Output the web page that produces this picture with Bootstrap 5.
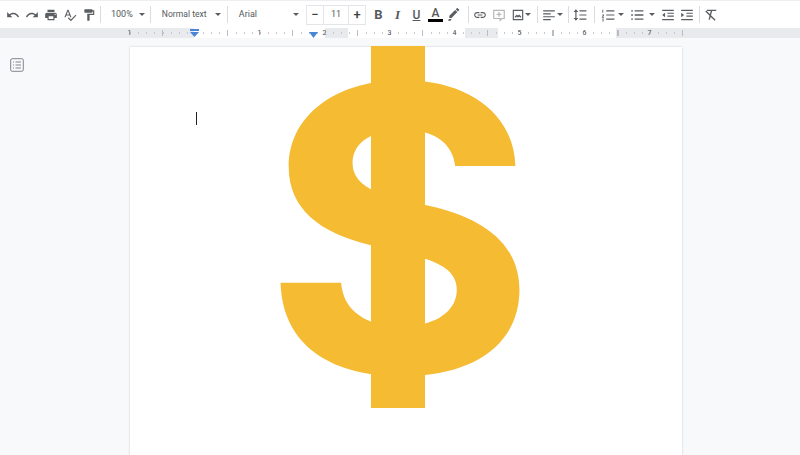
<!DOCTYPE html>
<html lang="en">
<head>
    <meta charset="UTF-8">
    <title>Untitled document</title>

    <!-- Bootstrap CSS -->
    <link href="https://cdn.jsdelivr.net/npm/bootstrap@5.3.0/dist/css/bootstrap.min.css" rel="stylesheet">

    <style>
        html, body { height: 100%; overflow: hidden; }
        body { background: #f8f9fa; font-family: Roboto, "Liberation Sans", sans-serif; color: #55595d; }

        /* Toolbar */
        .tool-bar { height: 28px; background: #fff; border-top: 1px solid #eceef0; padding-left: 3px; font-size: 9px; }
        .tool-btn { width: 19px; height: 19px; flex: none; }
        .tool-btn svg { width: 14px; height: 14px; fill: #5a5e62; }
        .tool-line svg { fill: none; stroke: #5a5e62; stroke-width: 2; }
        .tool-sep { width: 1px; height: 17px; background: #dadce0; flex: none; }
        .caret { width: 0; height: 0; border-left: 3px solid transparent; border-right: 3px solid transparent; border-top: 3px solid #5a5e62; flex: none; }
        .tool-label { flex: none; white-space: nowrap; }
        .font-box { width: 60px; height: 20px; border: 1px solid #e3e5e8; flex: none; }
        .font-box > div { height: 100%; }
        .font-step { width: 16px; font-size: 13px; font-weight: 500; color: #3c4043; }
        .font-size-val { width: 26px; font-size: 9px; border-left: 1px solid #e3e5e8; border-right: 1px solid #e3e5e8; }
        .fmt-letter { font-size: 13px; font-weight: 700; color: #55595d; line-height: 1; }
        .fmt-i { font-style: italic; font-family: "Liberation Serif", serif; }
        .fmt-u { text-decoration: underline; font-weight: 500; font-size: 12px; }
        .fmt-a { font-weight: 500; font-size: 12px; border-bottom: 3px solid #000; width: 15px; text-align: center; line-height: 11px; }
        .faint-icon { opacity: .45; }

        /* spacing between toolbar groups */
        .sep-a { margin-left: 2px; }
        .zoom-label { margin-left: 10px; }
        .caret-zoom { margin-left: 6px; }
        .sep-b { margin-left: 5px; }
        .style-label { margin-left: 11px; width: 42px; font-size: 8.6px; }
        .caret-style { margin-left: 11px; }
        .sep-c { margin-left: 6px; }
        .font-label { margin-left: 11px; }
        .caret-font { margin-left: 36px; }
        .font-box { margin-left: 7px; }
        .fmt-first { margin-left: 3px; }
        .sep-d { margin-left: 4px; }
        .tool-sep + .tool-btn { margin-left: 2px; }
        .caret-image { margin-left: -3px; }
        .sep-e { margin-left: 6px; }
        .caret-align { margin-left: -2px; }
        .sep-f { margin-left: 5px; }
        .sep-g { margin-left: 4px; }
        .tool-sep + .numbered-btn { margin-left: 4px; }
        .caret-num { margin-left: 0; }
        .bullets-btn { margin-left: 4px; }
        .caret-bul { margin-left: 2px; }
        .indent-btn { margin-left: 4px; }
        .sep-h { margin-left: 2px; }

        /* Ruler */
        .ruler-band { height: 10px; background: #e8eaed; position: relative; }
        .ruler-track { position: absolute; left: 130px; top: 0; width: 553px; height: 10px; background: #fff; }
        .ruler-margin-l { position: absolute; left: 0; top: 0; width: 64px; height: 10px; background: #e8eaed; }
        .ruler-margin-r { position: absolute; right: 0; top: 0; width: 67px; height: 10px; background: #e8eaed; }
        .ruler-grey-a { position: absolute; left: 195px; top: 0; width: 23px; height: 10px; background: #e8eaed; }
        .ruler-grey-b { position: absolute; left: 335px; top: 0; width: 33px; height: 10px; background: #e8eaed; }
        /* minor ticks every 1/8 inch, taller ones at each half inch */
        .ruler-track::after { content: ""; position: absolute; inset: 0;
            background:
                repeating-linear-gradient(90deg, transparent 0, transparent 32.5px, #b9bcc0 32.5px, #b9bcc0 33.5px, transparent 33.5px, transparent 65px) 0 2px / 100% 6px no-repeat,
                repeating-linear-gradient(90deg, #c6c9cc 0, #c6c9cc 1px, transparent 1px, transparent 8.125px) 0 4px / 100% 2px no-repeat; }
        .ruler-nums { position: absolute; left: 97px; top: 0; height: 10px; font-size: 7px; line-height: 10px; color: #4a4e52; }
        .ruler-nums span { width: 65px; text-align: center; flex: none; }
        .indent-mark { position: absolute; width: 9px; height: 8px; }
        .indent-a { left: 190px; top: 1px; }
        .indent-b { left: 309px; top: 3px; }

        /* Document area */
        .doc-area { position: relative; height: 417px; }
        .outline-btn { position: absolute; left: 10px; top: 20px; width: 14px; height: 14px; }
        .doc-page { position: absolute; left: 130px; top: 9px; width: 552px; height: 420px; background: #fff; box-shadow: 0 0 2px rgba(60, 64, 67, .25); }
        .text-caret { position: absolute; left: 66px; top: 65px; width: 1px; height: 13px; background: #202124; }
        .big-dollar { position: absolute; left: 2px; width: 536px; top: -17px; font-family: Inter, "Liberation Sans", sans-serif; font-weight: 700; font-size: 396px; line-height: 1; color: #f4bb33; text-align: center; transform: scaleX(1.055); clip-path: inset(16px 0 18px 0); }
        .dollar-stem { position: absolute; left: 241px; top: -1px; width: 54px; height: 362px; background: #f4bb33; }
    </style>
</head>
<body>

    <!-- Toolbar -->
    <div class="tool-bar d-flex align-items-center">
        <div class="tool-btn d-flex align-items-center justify-content-center"><svg viewBox="0 0 24 24"><path d="M12.5 8c-2.65 0-5.05.99-6.9 2.6L2 7v9h9l-3.62-3.62c1.39-1.16 3.16-1.88 5.12-1.88 3.54 0 6.55 2.31 7.6 5.5l2.37-.78C21.08 11.03 17.15 8 12.5 8z"/></svg></div>
        <div class="tool-btn d-flex align-items-center justify-content-center"><svg viewBox="0 0 24 24"><path d="M18.4 10.6C16.55 8.99 14.15 8 11.5 8c-4.65 0-8.58 3.03-9.96 7.22L3.9 16c1.05-3.19 4.05-5.5 7.6-5.5 1.95 0 3.73.72 5.12 1.88L13 16h9V7l-3.6 3.6z"/></svg></div>
        <div class="tool-btn d-flex align-items-center justify-content-center"><svg viewBox="0 0 24 24"><path d="M19 8H5c-1.66 0-3 1.34-3 3v6h4v4h12v-4h4v-6c0-1.66-1.34-3-3-3zm-3 11H8v-5h8v5zm3-7c-.55 0-1-.45-1-1s.45-1 1-1 1 .45 1 1-.45 1-1 1zm-1-9H6v4h12V3z"/></svg></div>
        <div class="tool-btn d-flex align-items-center justify-content-center"><svg viewBox="0 0 24 24"><path d="M12.45 16h2.09L9.43 3H7.57L2.46 16h2.09l1.12-3h5.64l1.14 3zm-6.02-5L8.5 5.48 10.57 11H6.43zm15.16.59l-8.09 8.09L9.83 16l-1.41 1.41 5.09 5.09L23 13l-1.41-1.41z"/></svg></div>
        <div class="tool-btn d-flex align-items-center justify-content-center"><svg viewBox="0 0 24 24"><path d="M18 4V3c0-.55-.45-1-1-1H5c-.55 0-1 .45-1 1v4c0 .55.45 1 1 1h12c.55 0 1-.45 1-1V6h1v4H9v11c0 .55.45 1 1 1h2c.55 0 1-.45 1-1v-9h8V4h-3z"/></svg></div>
        <div class="tool-sep sep-a"></div>

        <span class="tool-label zoom-label">100%</span>
        <span class="caret caret-zoom"></span>
        <div class="tool-sep sep-b"></div>
        <span class="tool-label style-label">Normal text</span>
        <span class="caret caret-style"></span>
        <div class="tool-sep sep-c"></div>
        <span class="tool-label font-label">Arial</span>
        <span class="caret caret-font"></span>

        <div class="font-box d-flex">
            <div class="font-step d-flex align-items-center justify-content-center">&minus;</div>
            <div class="font-size-val d-flex align-items-center justify-content-center">11</div>
            <div class="font-step d-flex align-items-center justify-content-center">+</div>
        </div>

        <div class="tool-btn fmt-first d-flex align-items-center justify-content-center"><span class="fmt-letter">B</span></div>
        <div class="tool-btn d-flex align-items-center justify-content-center"><span class="fmt-letter fmt-i">I</span></div>
        <div class="tool-btn d-flex align-items-center justify-content-center"><span class="fmt-letter fmt-u">U</span></div>
        <div class="tool-btn d-flex align-items-center justify-content-center"><span class="fmt-letter fmt-a">A</span></div>
        <div class="tool-btn d-flex align-items-center justify-content-center"><svg viewBox="0 0 24 24"><path d="M17.75 7L14 3.25l-10 10V17h3.75l10-10zm2.96-2.96c.39-.39.39-1.02 0-1.41L18.37.29a.996.996 0 0 0-1.41 0L15 2.25 18.75 6l1.96-1.96zM3 19h5l-2 3H2z"/></svg></div>
        <div class="tool-sep sep-d"></div>

        <div class="tool-btn d-flex align-items-center justify-content-center"><svg viewBox="0 0 24 24"><path d="M3.9 12c0-1.71 1.39-3.1 3.1-3.1h4V7H7c-2.76 0-5 2.24-5 5s2.24 5 5 5h4v-1.9H7c-1.71 0-3.1-1.39-3.1-3.1zM8 13h8v-2H8v2zm9-6h-4v1.9h4c1.71 0 3.1 1.39 3.1 3.1s-1.39 3.1-3.1 3.1h-4V17h4c2.76 0 5-2.24 5-5s-2.24-5-5-5z"/></svg></div>
        <div class="tool-btn tool-line d-flex align-items-center justify-content-center"><svg viewBox="0 0 24 24" class="faint-icon"><path d="M3 4h18v14h-4l-3 3v-3H3zM12 7v8M8 11h8"/></svg></div>
        <div class="tool-btn tool-line d-flex align-items-center justify-content-center"><svg viewBox="0 0 24 24"><path d="M4 4h16v16H4z"/><path d="M7 16l3-3 2 2 2-2 3 3" stroke-width="2.5"/></svg></div>
        <span class="caret caret-image"></span>
        <div class="tool-sep sep-e"></div>

        <div class="tool-btn tool-line d-flex align-items-center justify-content-center"><svg viewBox="0 0 24 24"><path d="M2 5h20M2 10h13M2 15h20M2 20h13"/></svg></div>
        <span class="caret caret-align"></span>
        <div class="tool-sep sep-f"></div>
        <div class="tool-btn tool-line spacing-btn d-flex align-items-center justify-content-center"><svg viewBox="0 0 24 24"><path d="M11 5h12M11 12h12M11 19h12M5 4v16"/><path d="M1 7l4-5 4 5zM1 17l4 5 4-5z" fill="#5a5e62" stroke="none"/></svg></div>
        <div class="tool-sep sep-g"></div>
        <div class="tool-btn tool-line numbered-btn d-flex align-items-center justify-content-center"><svg viewBox="0 0 24 24"><path d="M9 5h14M9 12h14M9 19h14"/><path d="M3 3v5M2 12h3l-3 4h3M2 19h3M2 22h3" stroke-width="1.5"/></svg></div>
        <span class="caret caret-num"></span>
        <div class="tool-btn tool-line bullets-btn d-flex align-items-center justify-content-center"><svg viewBox="0 0 24 24"><path d="M8 5h15M8 12h15M8 19h15M2 5h3M2 12h3M2 19h3" stroke-width="2.4"/></svg></div>
        <span class="caret caret-bul"></span>
        <div class="tool-btn tool-line indent-btn d-flex align-items-center justify-content-center"><svg viewBox="0 0 24 24"><path d="M2 4h20M11 9h11M11 14h11M2 20h20"/><path d="M7 8v8l-5-4z" fill="#5a5e62" stroke="none"/></svg></div>
        <div class="tool-btn tool-line d-flex align-items-center justify-content-center"><svg viewBox="0 0 24 24"><path d="M2 4h20M11 9h11M11 14h11M2 20h20"/><path d="M2 8v8l5-4z" fill="#5a5e62" stroke="none"/></svg></div>
        <div class="tool-sep sep-h"></div>
        <div class="tool-btn tool-line clear-btn d-flex align-items-center justify-content-center"><svg viewBox="0 0 24 24"><path d="M5 4h16M13 4l-4 16M3 5l16 16" stroke-width="2.4"/></svg></div>
    </div>

    <!-- Ruler -->
    <div class="ruler-band">
        <div class="ruler-track">
            <div class="ruler-margin-l"></div>
            <div class="ruler-grey-a"></div>
            <div class="ruler-grey-b"></div>
            <div class="ruler-margin-r"></div>
        </div>
        <div class="ruler-nums d-flex">
            <span>1</span><span></span><span>1</span><span>2</span><span>3</span><span>4</span><span>5</span><span>6</span><span>7</span>
        </div>
        <svg class="indent-mark indent-a" viewBox="0 0 9 8"><path d="M0 0h9v2H0zM0 3h9L4.500 8z" fill="#4a86d8"/></svg>
        <svg class="indent-mark indent-b" viewBox="0 0 9 8"><path d="M0 1h9L4.500 7z" fill="#4a86d8"/></svg>
    </div>

    <!-- Document -->
    <div class="doc-area">
        <svg class="outline-btn" viewBox="0 0 14 14"><rect x=".7" y=".7" width="12.6" height="12.6" rx="1.500" fill="none" stroke="#80868b"/><path d="M3 4h1M5.500 4h5.500M3 7h1M5.500 7h5.500M3 10h1M5.500 10h5.500" stroke="#80868b"/></svg>
        <div class="doc-page">
            <div class="text-caret"></div>
            <div class="big-dollar">$</div>
            <div class="dollar-stem"></div>
        </div>
    </div>

    <script src="https://cdn.jsdelivr.net/npm/bootstrap@5.3.0/dist/js/bootstrap.bundle.min.js"></script>
</body>
</html>
